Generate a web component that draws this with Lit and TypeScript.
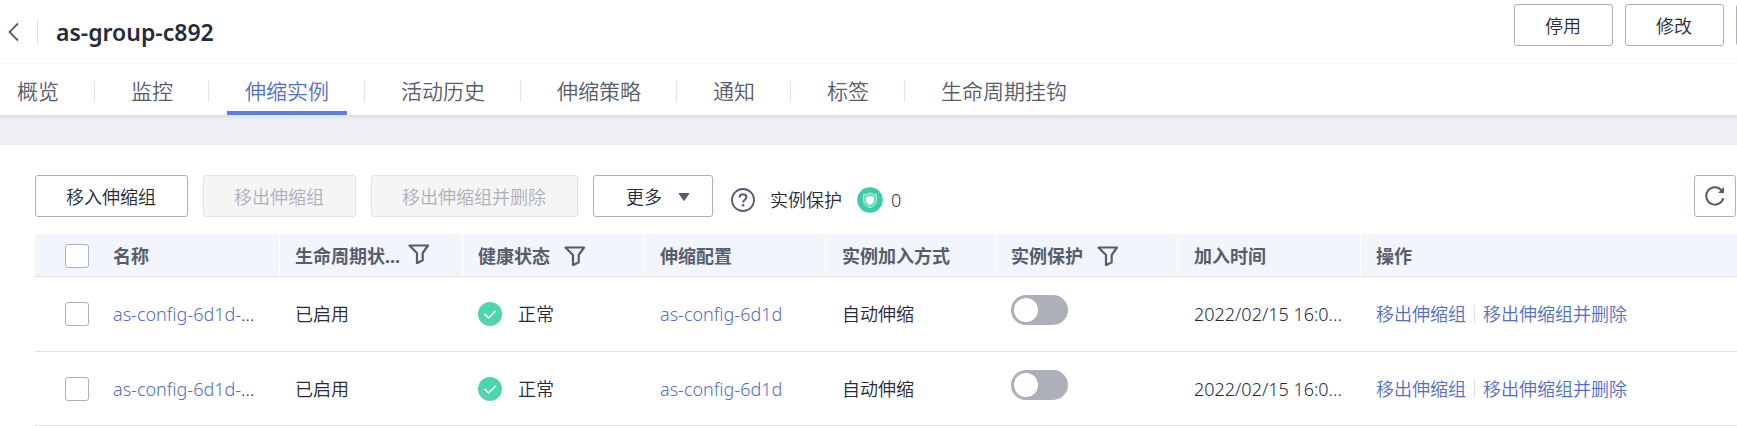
import { LitElement, html, css, svg } from "lit";
import { customElement, property, state } from "lit/decorators.js";
import { classMap } from "lit/directives/class-map.js";

const funnel = svg`<path d="M1.500 1.500h18.500l-5.300 7.500v7.200l-5.700 3V9z" fill="none" stroke="currentColor" stroke-width="2.200" stroke-linejoin="round"/>`;

interface Instance {
  name: string;
  lifecycle: string;
  health: string;
  config: string;
  joinedBy: string;
  joinedAt: string;
}

@customElement("filter-button")
export class FilterButton extends LitElement {
  @property() label = "";

  static styles = css`
    :host {
      display: block;
      flex: none;
    }
    .filter {
      display: block;
      padding: 0;
      border: 0;
      background: none;
      color: #575d6c;
      cursor: pointer;
    }
    .icon {
      display: block;
    }
  `;

  render() {
    return html`<button class="filter" aria-label=${"筛选" + this.label}>
      <svg class="icon" width="21" height="20" viewBox="0 0 21 20">${funnel}</svg>
    </button>`;
  }
}

@customElement("app-root")
export class AppRoot extends LitElement {
  @state() private activeTab = "伸缩实例";

  private tabs = ["概览", "监控", "伸缩实例", "活动历史", "伸缩策略", "通知", "标签", "生命周期挂钩"];

  private instances: Instance[] = [0, 1].map(() => ({
    name: "as-config-6d1d-",
    lifecycle: "已启用",
    health: "正常",
    config: "as-config-6d1d",
    joinedBy: "自动伸缩",
    joinedAt: "2022/02/15 16:0...",
  }));

  static styles = css`
    :host {
      display: block;
      overflow: hidden;
      background: #fff;
      color: #252b3a;
      font: 350 18px/24px "Noto Sans", "Noto Sans CJK SC", sans-serif;
    }
    * {
      box-sizing: border-box;
    }
    a {
      color: #526ecc;
      text-decoration: none;
    }
    svg {
      display: block;
      flex: none;
    }
    .header {
      display: flex;
      align-items: flex-start;
      height: 64px;
      padding: 4px 0 0 8px;
      border-bottom: 1px solid #f5f5f6;
    }
    .heading {
      display: flex;
      align-items: center;
      flex: 1;
      padding-top: 12px;
    }
    .back {
      padding: 0;
      border: 0;
      background: none;
      color: #575d6c;
    }
    .rule {
      width: 1px;
      height: 24px;
      margin: 0 18px;
      background: #dfe1e6;
    }
    .title {
      margin: 0;
      font-size: 23px;
      line-height: 32px;
      font-weight: 600;
    }
    .actions {
      display: flex;
      gap: 12px;
      margin-right: -97px;
    }
    .btn {
      display: flex;
      align-items: center;
      justify-content: center;
      gap: 16px;
      height: 42px;
      padding: 1px 31px 0 30px;
      border: 1px solid #adb0b8;
      border-radius: 3px;
      background: #fff;
      color: #252b3a;
      font: inherit;
      white-space: nowrap;
    }
    .btn:disabled {
      border-color: #dfe1e6;
      background: #f5f5f6;
      color: #adb0b8;
    }
    .overflow {
      width: 98px;
    }
    .more {
      padding: 1px 22px 0 32px;
    }
    .square {
      width: 42px;
      padding: 0;
      margin-left: auto;
      color: #575d6c;
    }
    .tabs {
      display: flex;
      height: 51px;
      margin: 0;
      padding: 0 0 0 17px;
      list-style: none;
      font-size: 21px;
    }
    .item {
      display: flex;
      align-items: center;
    }
    .item + .item::before {
      content: "";
      width: 1px;
      height: 21px;
      margin: 4px 18px 0 17px;
      background: #dfe1e6;
    }
    .tab {
      display: flex;
      align-items: center;
      height: 51px;
      padding: 6px 18px 0;
      border-bottom: 4px solid transparent;
      color: #575d6c;
    }
    .item:first-child .tab {
      padding-left: 0;
    }
    .tab.active {
      border-color: #5e7ce0;
      color: #526ecc;
    }
    .band {
      height: 30px;
      background: linear-gradient(#dddee3, #eeeff5 5px);
    }
    .content {
      padding: 30px 0 0 35px;
    }
    .toolbar {
      display: flex;
      gap: 15px;
      margin-bottom: 17px;
      padding-right: 1px;
    }
    .protection {
      display: flex;
      align-items: center;
      gap: 15px;
      padding-top: 8px;
      margin-left: 3px;
    }
    .count {
      display: flex;
      align-items: center;
      gap: 8px;
    }
    .grid {
      width: 100%;
      table-layout: fixed;
      border-collapse: separate;
      border-spacing: 0;
    }
    .c-check { width: 62px; }
    .c-std { width: 182px; }
    .c-filter { width: 183px; }
    .c-join { width: 169px; }
    th,
    td {
      padding: 0 0 0 16px;
      border-bottom: 1px solid #dfe1e6;
      text-align: left;
      white-space: nowrap;
    }
    th {
      height: 43px;
      padding-top: 1px;
      background: #f2f5fc;
      color: #575d6c;
      font-weight: 700;
    }
    th + th + th {
      padding-left: 15px;
      border-left: 1px solid #fff;
    }
    td {
      height: 75px;
    }
    tr:last-child td {
      height: 74px;
    }
    th:first-child,
    td:first-child {
      padding-left: 30px;
    }
    .cell {
      display: flex;
      align-items: center;
      gap: 16px;
    }
    th .cell {
      gap: 14px;
    }
    th .cell.tight {
      gap: 8px;
      align-items: flex-start;
    }
    .ops {
      display: flex;
      align-items: center;
      gap: 8px;
    }
    .bar {
      width: 1px;
      height: 18px;
      background: #dfe1e6;
    }
    .check {
      display: block;
      appearance: none;
      width: 24px;
      height: 24px;
      margin: 0;
      border: 1px solid #adb0b8;
      border-radius: 3px;
      background: #fff;
    }
    .check:checked {
      background: #5e7ce0;
    }
    .switch {
      display: block;
      appearance: none;
      width: 57px;
      height: 30px;
      margin: 0 0 8px;
      padding: 3px;
      border-radius: 15px;
      background: #adb0b8;
    }
    .switch::before {
      content: "";
      display: block;
      width: 24px;
      height: 24px;
      border-radius: 50%;
      background: #fff;
    }
    .switch:checked {
      background: #5e7ce0;
    }
    .switch:checked::before {
      margin-left: auto;
    }
  `;

  private renderRow(row: Instance) {
    return html`<tr>
      <td><input class="check" type="checkbox" aria-label="选择实例" /></td>
      <td><a href="#">${row.name}</a>...</td>
      <td>${row.lifecycle}</td>
      <td>
        <div class="cell">
          <svg width="24" height="24" viewBox="0 0 24 24">
            <circle cx="12" cy="12" r="12" fill="#50d4ab" />
            <path d="M6.500 12l4 4 7-7" fill="none" stroke="#fff" stroke-width="1.500" />
          </svg>
          ${row.health}
        </div>
      </td>
      <td><a href="#">${row.config}</a></td>
      <td>${row.joinedBy}</td>
      <td><input class="switch" type="checkbox" role="switch" aria-label="实例保护" /></td>
      <td>${row.joinedAt}</td>
      <td>
        <div class="ops">
          <a href="#">移出伸缩组</a><span class="bar"></span><a href="#">移出伸缩组并删除</a>
        </div>
      </td>
    </tr>`;
  }

  render() {
    return html`
      <header class="header">
        <div class="heading">
          <button class="back" aria-label="返回">
            <svg width="11" height="20" viewBox="0 0 11 20">
              <path d="M10 1.500L1.500 10l8.500 8.500" fill="none" stroke="currentColor" stroke-width="1.800" />
            </svg>
          </button>
          <span class="rule"></span>
          <h1 class="title">as-group-c892</h1>
        </div>
        <div class="actions">
          <button class="btn">停用</button>
          <button class="btn">修改</button>
          <button class="btn overflow" aria-label="更多"></button>
        </div>
      </header>
      <nav>
        <ul class="tabs">
          ${this.tabs.map(
            (tab) => html`<li class="item">
              <a
                href="#"
                class=${classMap({ tab: true, active: tab === this.activeTab })}
                @click=${() => (this.activeTab = tab)}
                >${tab}</a
              >
            </li>`
          )}
        </ul>
      </nav>
      <div class="band"></div>
      <main class="content">
        <div class="toolbar">
          <button class="btn">移入伸缩组</button>
          <button class="btn" disabled>移出伸缩组</button>
          <button class="btn" disabled>移出伸缩组并删除</button>
          <button class="btn more">
            更多
            <svg width="12" height="8" viewBox="0 0 12 8">
              <path d="M1 .5h10L6 7.500z" fill="#575d6c" stroke="#575d6c" stroke-linejoin="round" />
            </svg>
          </button>
          <div class="protection">
            <svg width="24" height="24" viewBox="0 0 24 24" fill="none" stroke="#575d6c">
              <circle cx="12" cy="12" r="11" stroke-width="1.800" />
              <path d="M8.600 9.600c0-2 1.400-3.300 3.400-3.300s3.400 1.200 3.400 3c0 2.500-3.300 2.500-3.300 5.200" stroke-width="2" />
              <circle cx="12.100" cy="17.300" r="1.300" fill="#575d6c" stroke="none" />
            </svg>
            <span>实例保护</span>
            <span class="count">
              <svg width="26" height="26" viewBox="0 0 26 26">
                <circle cx="13" cy="13" r="12.800" fill="#3dcca6" />
                <path d="M13 5.500c2 1.400 4 2 6.500 2.200v5.300c0 3.700-2.600 6.200-6.500 7.700-3.900-1.500-6.500-4-6.500-7.700V7.700C9 7.500 11 6.900 13 5.500z" fill="#6fdcc0" stroke="#b5efdf" stroke-width="1" />
                <path d="M13 8.700c1.300.8 2.600 1.200 4 1.300v3.200c0 2.200-1.600 3.700-4 4.700-2.400-1-4-2.500-4-4.700V10c1.400-.1 2.700-.5 4-1.300z" fill="#fff" />
              </svg>
              0
            </span>
          </div>
          <button class="btn square" aria-label="刷新">
            <svg width="20" height="20" viewBox="0 0 20 20">
              <path d="M18.300 12.300A8.700 8.700 0 1 1 16.600 4.300" fill="none" stroke="currentColor" stroke-width="2" />
              <path d="M19 1v6h-6z" fill="currentColor" />
            </svg>
          </button>
        </div>
        <table class="grid">
          <colgroup>
            <col class="c-check" /><col class="c-std" /><col class="c-filter" /><col class="c-std" />
            <col class="c-std" /><col class="c-join" /><col class="c-filter" /><col class="c-std" /><col />
          </colgroup>
          <thead>
            <tr>
              <th><input class="check" type="checkbox" aria-label="全选" /></th>
              <th>名称</th>
              <th><div class="cell tight">生命周期状...<filter-button label="生命周期状态"></filter-button></div></th>
              <th><div class="cell">健康状态<filter-button label="健康状态"></filter-button></div></th>
              <th>伸缩配置</th>
              <th>实例加入方式</th>
              <th><div class="cell">实例保护<filter-button label="实例保护"></filter-button></div></th>
              <th>加入时间</th>
              <th>操作</th>
            </tr>
          </thead>
          <tbody>
            ${this.instances.map((row) => this.renderRow(row))}
          </tbody>
        </table>
      </main>
    `;
  }
}
